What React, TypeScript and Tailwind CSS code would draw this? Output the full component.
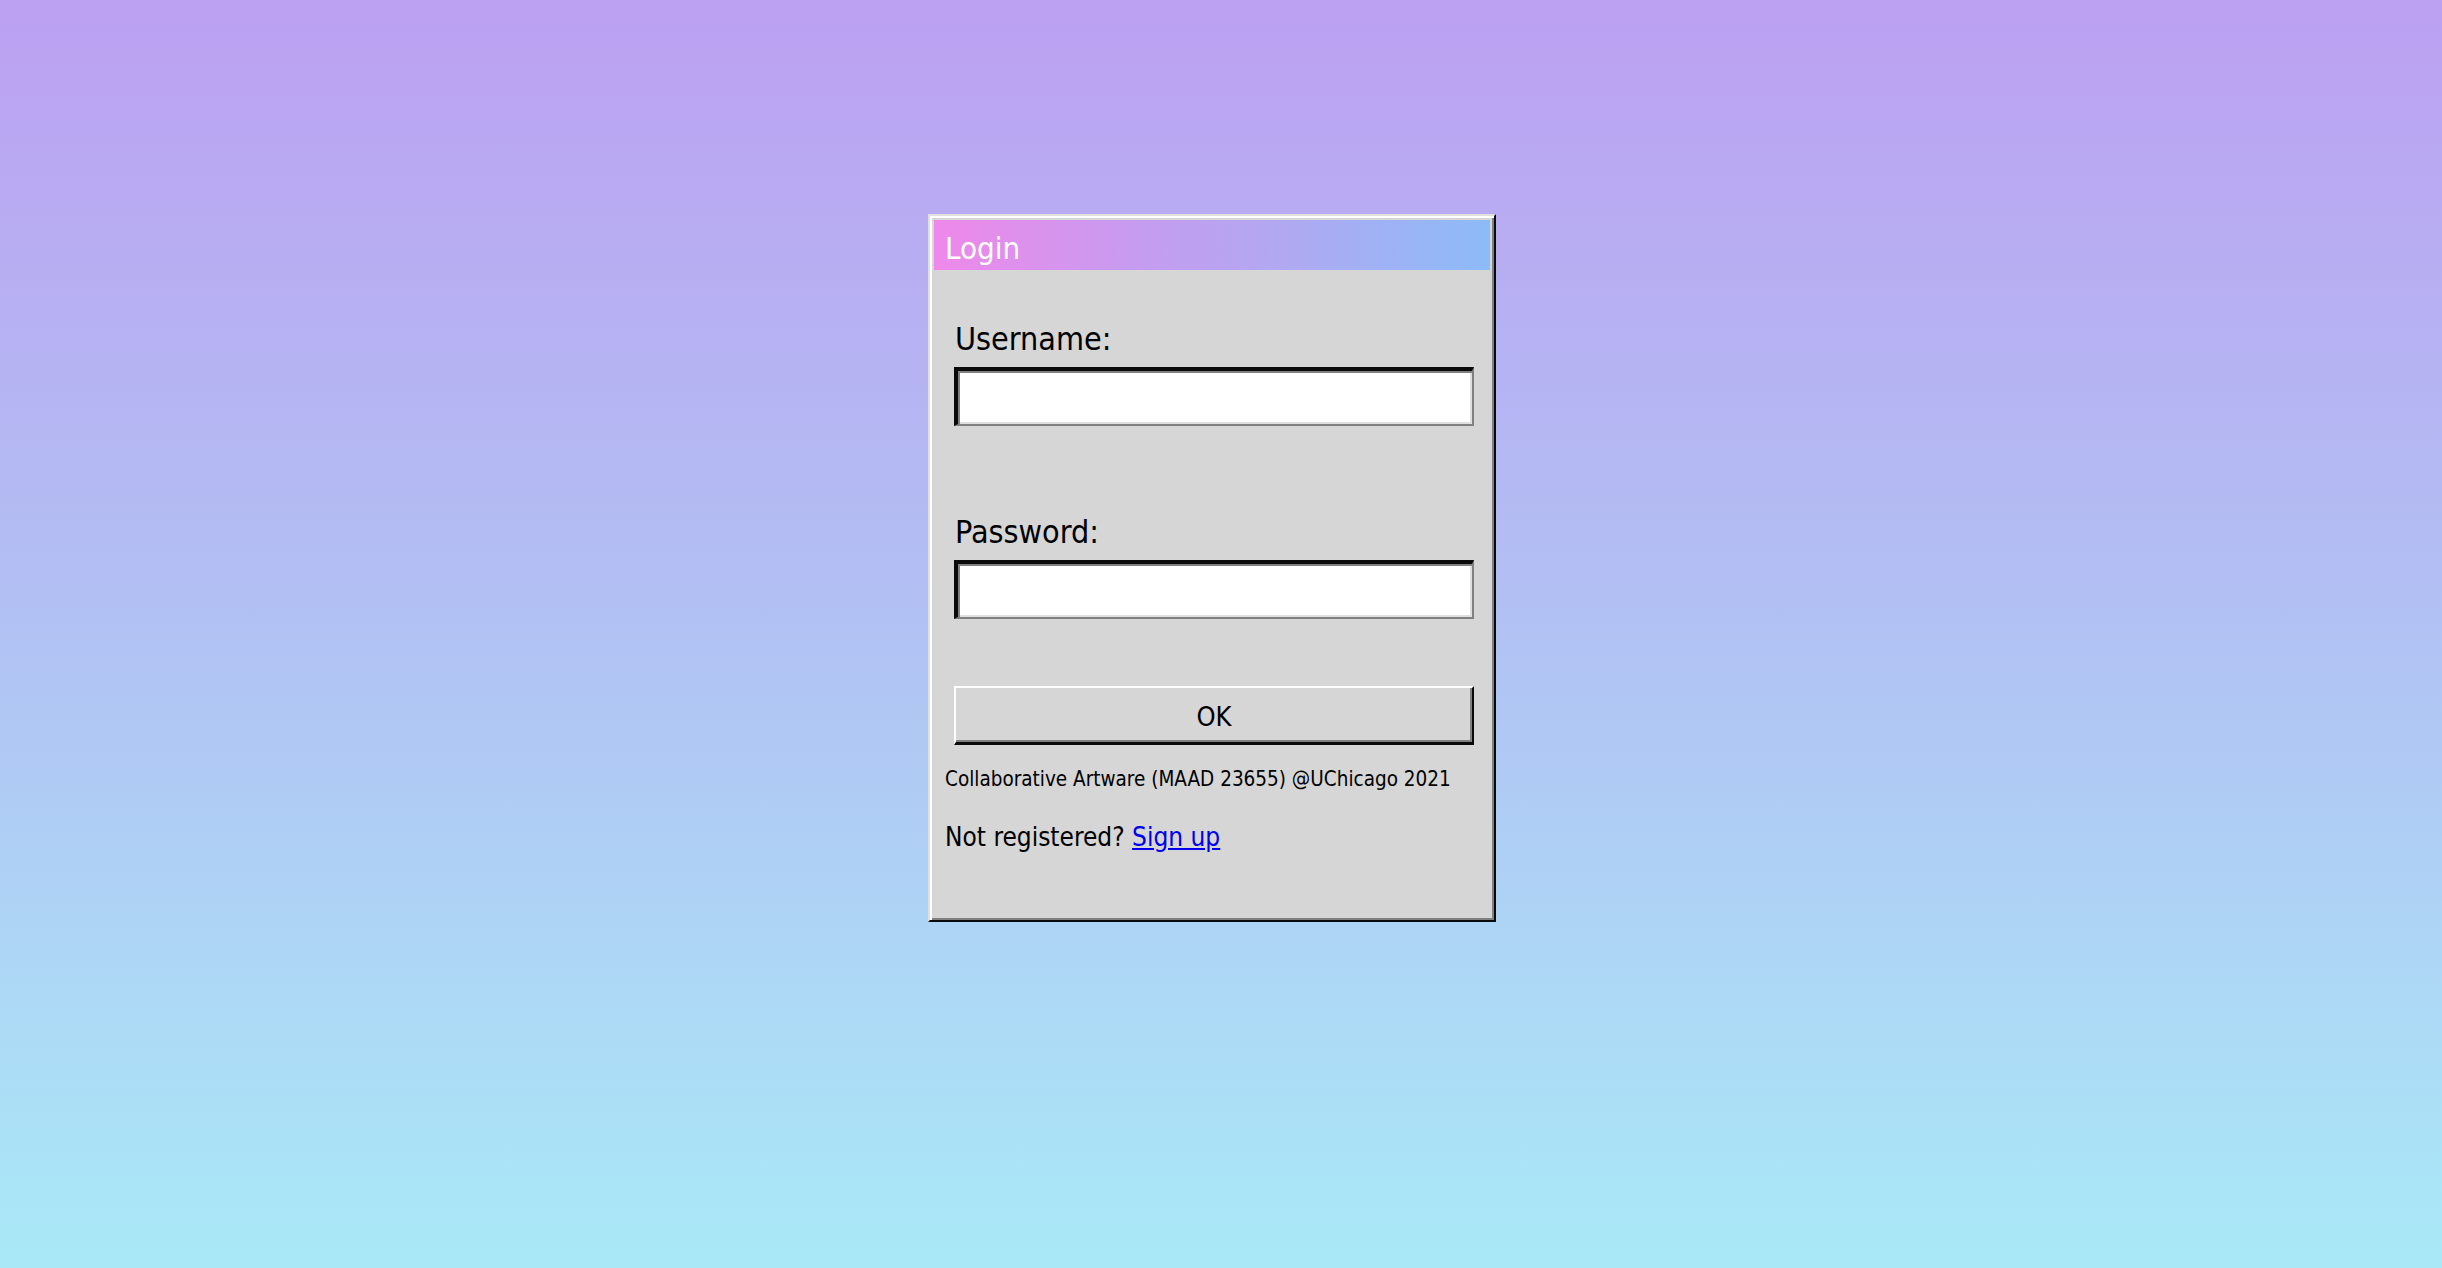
import React from "react";

const font = "font-['DejaVu_Sans_Condensed','DejaVu_Sans',sans-serif] font-stretch-condensed";

export default function App() {
  return (
    <div className={`min-h-[1268px] w-full bg-[linear-gradient(180deg,#bca0f2_0%,#b2bef3_45%,#a9e9f7_100%)] flex justify-center pr-[18px] pt-[214px] ${font}`}>
      <div className="w-[568px] h-[708px] bg-[#d6d6d6] border-t-2 border-l-2 border-t-[#dfdfdf] border-l-[#dfdfdf] border-r-2 border-b-2 border-r-[#0a0a0a] border-b-[#0a0a0a] shadow-[inset_2px_2px_#ffffff,inset_-2px_-2px_#808080] p-[4px] flex flex-col">
        <div className="h-[50px] shrink-0 flex items-center pl-[11px] bg-[linear-gradient(90deg,#ef88ea_0%,#c79bef_35%,#b3a7f1_60%,#8cbbf7_100%)]">
          <span className="text-white text-[31px] leading-[36px] pt-[5px]">Login</span>
        </div>
        <div className="pl-[11px] pr-[11px] flex flex-col">
          <form className="pl-[9px] pr-[5px] flex flex-col" onSubmit={(e) => e.preventDefault()}>
            <label className="mt-[49px] pl-[1px] text-[32px] leading-[40px] text-black">Username:</label>
            <input
              type="text"
              className="mt-[8px] h-[59px] w-full bg-white border-t-4 border-l-4 border-t-[#0a0a0a] border-l-[#0a0a0a] border-r-2 border-b-2 border-r-[#808080] border-b-[#808080] shadow-[inset_2px_2px_#808080,inset_-2px_-2px_#dfdfdf] outline-none px-2 text-[24px]"
            />
            <label className="mt-[86px] pl-[1px] text-[32px] leading-[40px] text-black">Password:</label>
            <input
              type="password"
              className="mt-[8px] h-[59px] w-full bg-white border-t-4 border-l-4 border-t-[#0a0a0a] border-l-[#0a0a0a] border-r-2 border-b-2 border-r-[#808080] border-b-[#808080] shadow-[inset_2px_2px_#808080,inset_-2px_-2px_#dfdfdf] outline-none px-2 text-[24px]"
            />
            <button
              type="submit"
              className="mt-[67px] h-[59px] w-full bg-[#d6d6d6] border-t-2 border-l-2 border-t-white border-l-white border-r-2 border-b-[3px] border-r-[#0a0a0a] border-b-[#0a0a0a] shadow-[inset_-2px_-2px_#808080] text-[27px] leading-none pt-[2px] text-black"
            >
              OK
            </button>
          </form>
          <p className="mt-[22px] text-[20.5px] leading-[25px] text-black">
            Collaborative Artware (MAAD 23655) @UChicago 2021
          </p>
          <p className="mt-[29px] text-[26px] leading-[32px] text-black">
            Not registered?{" "}
            <a href="#" className="text-[#0000ee] underline">
              Sign up
            </a>
          </p>
        </div>
      </div>
    </div>
  );
}
